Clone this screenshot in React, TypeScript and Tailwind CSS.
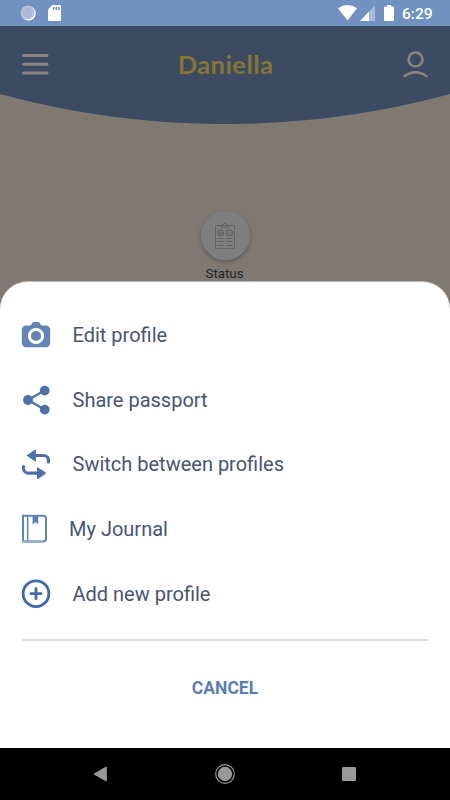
import React from "react";

const CameraIcon = () => (
  <svg className="h-[30px] w-[30px]" viewBox="0 0 30 30">
    <path
      fill="#6384b4"
      d="M5 5.500h3.600c1.200 0 1.300-.5 2-1.500C11.400 2.500 12 2 13.200 2h3.600c1.200 0 1.800.5 2.600 2 .7 1 .8 1.500 2 1.500H25a4.200 4.200 0 0 1 4.200 4.200V23a4.200 4.200 0 0 1-4.200 4.200H5A4.200 4.200 0 0 1 .8 23V9.700A4.200 4.200 0 0 1 5 5.500z"
    />
    <circle cx="15" cy="16" r="6.600" fill="none" stroke="#fff" strokeWidth="3" />
  </svg>
);

const ShareIcon = () => (
  <svg className="h-[30px] w-[30px]" viewBox="0 0 30 30">
    <path d="M23.500 5.500L7 15l16.500 9.500" fill="none" stroke="#4d70ab" strokeWidth="2.200" />
    <g fill="#4d70ab">
      <circle cx="23.700" cy="5.600" r="4.900" />
      <circle cx="7" cy="15" r="4.900" />
      <circle cx="23.700" cy="24.600" r="4.900" />
    </g>
  </svg>
);

const SwitchIcon = () => (
  <svg className="h-[30px] w-[30px]" viewBox="0 0 30 30">
    <g fill="none" stroke="#4d70ab" strokeWidth="3.200" strokeLinecap="round">
      <path d="M12 6.500h10.500a5 5 0 0 1 5 5v1.500" />
      <path d="M18 24.200H7.500a5 5 0 0 1-5-5v-1.700" />
    </g>
    <g fill="#4d70ab" stroke="#4d70ab" strokeWidth="1.400" strokeLinejoin="round">
      <path d="M6.600 6.500l7.600-5.200v10.400z" />
      <path d="M24.200 24.200l-7.600-5.200v10.400z" />
    </g>
  </svg>
);

const JournalIcon = () => (
  <svg className="h-[30px] w-[30px]" viewBox="0 0 30 30">
    <path d="M2 1.800h20.500q2.500 0 2.500 3v20q0 2.700-3 2.700H2z" fill="none" stroke="#5f84b5" strokeWidth="2" />
    <path d="M1 27.600h21.500" stroke="#94aacb" strokeWidth="2" />
    <path d="M6.700 2v25" stroke="#6888ba" strokeWidth="1.600" />
    <path d="M11.600 2h5.600v8.600l-2.800-2.500-2.800 2.500z" fill="#5d80b2" />
  </svg>
);

const AddIcon = () => (
  <svg className="h-[30px] w-[30px]" viewBox="0 0 30 30" fill="none" stroke="#4268ab">
    <circle cx="15" cy="14.700" r="12.900" strokeWidth="2.800" />
    <path d="M15 9.700v10M10 14.700h10" strokeWidth="2.800" strokeLinecap="round" />
  </svg>
);

const menuItems = [
  { label: "Edit profile", icon: <CameraIcon />, gap: "ml-[21.500px]" },
  { label: "Share passport", icon: <ShareIcon />, gap: "ml-[21.500px]" },
  { label: "Switch between profiles", icon: <SwitchIcon />, gap: "ml-[21.500px]" },
  { label: "My Journal", icon: <JournalIcon />, gap: "ml-[18px]" },
  { label: "Add new profile", icon: <AddIcon />, gap: "ml-[21.500px]" },
];

const StatusBar = () => (
  <div className="flex h-[26px] items-center bg-[#7191c1] text-white">
    <svg className="ml-5 h-4 w-4" viewBox="0 0 16 16">
      <circle cx="8.400" cy="8.400" r="7.300" fill="#fff" />
      <circle cx="7.600" cy="7.600" r="7" fill="#a9bbd9" />
      <circle cx="7.600" cy="7.600" r="5.800" fill="none" stroke="#c9d5e8" strokeWidth="1.400" strokeDasharray="1 1.200" />
    </svg>
    <svg className="ml-3 h-4 w-[13px]" viewBox="0 0 13 16">
      <path d="M4.500 0H12q1 0 1 1v14q0 1-1 1H1q-1 0-1-1V4.500z" fill="#fff" />
      <path d="M5.600 2v3M8.300 2v3M11 2v3" stroke="#6487bd" strokeWidth="1.500" />
    </svg>
    <svg className="ml-auto h-4 w-[19px]" viewBox="0 0 19 16">
      <path d="M0 3.200Q9.500-3.200 19 3.200L9.500 15.600z" fill="#fff" />
    </svg>
    <svg className="ml-[3px] h-4 w-[15px]" viewBox="0 0 15 16">
      <path d="M0 16L15 0.500V16z" fill="#a5b9d9" />
      <path d="M0 16L9 6.700V16z" fill="#fff" />
    </svg>
    <svg className="ml-[9px] h-4 w-[10px]" viewBox="0 0 10 16">
      <path d="M3 0h4v1.500h2q1 0 1 1V15q0 1-1 1H1q-1 0-1-1V2.500q0-1 1-1h2z" fill="#fff" />
    </svg>
    <span className="mt-[3px] mr-[17px] ml-2 w-[31px] text-[15.500px] leading-none font-medium whitespace-nowrap">6:29</span>
  </div>
);

const Header = () => (
  <header className="relative h-[98px]">
    <svg className="absolute inset-0 h-[98px] w-[450px]" viewBox="0 0 450 98">
      <path d="M0 0H450V68A858 858 0 0 1 0 68z" fill="#3c4b62" />
    </svg>
    <div className="relative flex h-[76px] items-center justify-between px-[22px]">
      <svg className="h-[26px] w-[27px]" viewBox="0 0 27 26">
        <path d="M1.500 4.500h23.500M1.500 13.300h23.500M1.500 22h23.500" stroke="#88847e" strokeWidth="3" strokeLinecap="round" />
      </svg>
      <h1 className="mt-px font-['Lato'] text-[25.500px] font-bold tracking-[0.450px] text-[#877534]">Daniella</h1>
      <svg className="h-[28px] w-[26px]" viewBox="0 0 26 28" fill="none" stroke="#88847e" strokeWidth="2.600" strokeLinecap="round">
        <circle cx="13.500" cy="9.500" r="7" />
        <path d="M2.500 26q11-7.500 22 0" />
      </svg>
    </div>
  </header>
);

const StatusButton = () => (
  <div className="mt-[87px] flex flex-col items-center">
    <div className="flex h-[49px] w-[49px] items-center justify-center rounded-full bg-[#7e7e7e] shadow-[0_2px_4px_rgba(0,0,0,0.25)]">
      <svg className="h-[28px] w-[22px]" viewBox="0 0 22 28" fill="none" stroke="#636363" strokeWidth="1">
        <path d="M1.500 3.500h19v23h-19z" />
        <path d="M7 5V3h2q2-4 4 0h2v2z" />
        <circle cx="6.500" cy="11" r="2.800" strokeWidth="1.300" />
        <circle cx="15.500" cy="11" r="2.800" strokeWidth="1.300" />
        <path d="M5 11h3M6.500 9.500v3M14 11h3" />
        <path d="M3.500 16.500h6M3.500 19.500h6M3.500 23.500h6M12.500 16.500h6M12.500 19.500h6M12.500 23.500h6" />
      </svg>
    </div>
    <span className="mt-[5px] mr-px text-[13.300px] leading-[18px] text-[#1c262b]">Status</span>
  </div>
);

const ProfileSheet = () => (
  <section className="absolute top-[281px] left-0 flex h-[467px] w-full flex-col rounded-t-[28px] border-t border-[#bcb9b6] bg-white px-[22px] pt-[21px]">
    <ul>
      {menuItems.map((item) => (
        <li key={item.label} className="-ml-px flex h-[64.600px] items-center">
          {item.icon}
          <span className={`${item.gap} text-[20px] text-[#48556f]`}>{item.label}</span>
        </li>
      ))}
    </ul>
    <div className="mt-[13px] h-[2px] shrink-0 bg-[#dddddd]" />
    <button className="mt-[33px] self-center text-[17.500px] leading-7 font-bold text-[#5c7fb3]">CANCEL</button>
  </section>
);

const App = () => {
  return (
    <div className="relative flex h-[800px] w-[450px] flex-col overflow-hidden bg-[#7f7972] font-['Roboto',sans-serif]">
      <StatusBar />
      <Header />
      <StatusButton />
      <ProfileSheet />
      <nav className="mt-auto flex h-[52px] items-center justify-between bg-black pr-[94px] pl-[93px]">
        <svg className="h-4 w-[14px]" viewBox="0 0 14 16">
          <path d="M1 8L13.300 1v14z" fill="#999" stroke="#999" strokeLinejoin="round" />
        </svg>
        <svg className="h-5 w-5" viewBox="0 0 20 20">
          <circle cx="10" cy="10" r="9.300" fill="none" stroke="#999" strokeWidth="1.200" />
          <circle cx="10" cy="10" r="7.200" fill="#999" />
        </svg>
        <div className="h-[14px] w-[14px] rounded-[1px] bg-[#999]" />
      </nav>
    </div>
  );
};

export default App;
